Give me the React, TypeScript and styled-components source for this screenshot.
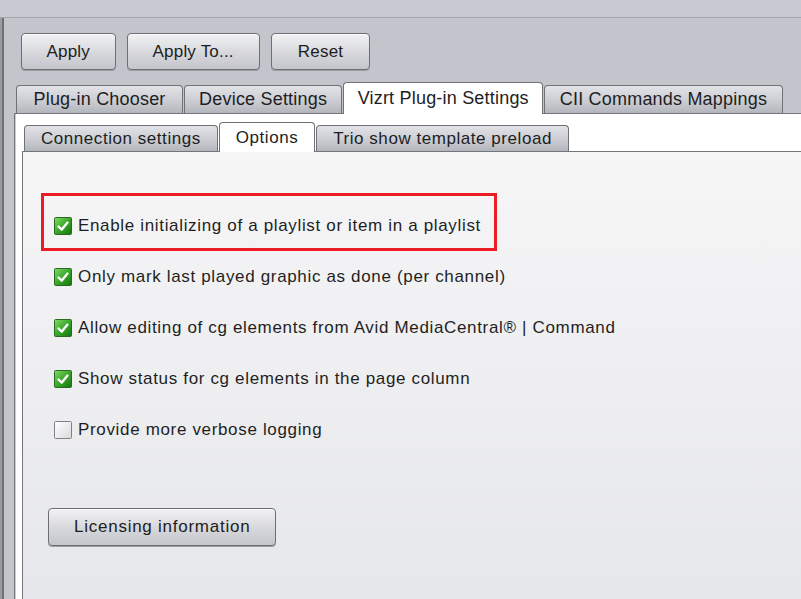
import React from 'react'
import styled, { createGlobalStyle } from 'styled-components'

const GlobalStyle = createGlobalStyle`
  html, body {
    margin: 0;
    padding: 0;
    background: #c2c5cc;
    font-family: "Liberation Sans", Arial, sans-serif;
  }
`

const Window = styled.div`
  width: 801px;
  height: 599px;
  overflow: hidden;
  display: flex;
  flex-direction: column;
  background: #c2c5cc;
`
const TitleStrip = styled.div`
  height: 17px;
  flex-shrink: 0;
  background: #c8cad1;
  border-bottom: 1px solid #a3a5ab;
`
const Body = styled.div`
  flex: 1;
  display: flex;
  min-height: 0;
`
const LeftRail = styled.div`
  width: 12px;
  flex-shrink: 0;
  border-left: 2px solid #9a9ca1;
  box-shadow: inset 2px 0 #6f7175;
`
const Main = styled.div`
  flex: 1;
  display: flex;
  flex-direction: column;
  min-width: 0;
`
const Toolbar = styled.div`
  display: flex;
  gap: 11px;
  padding: 15px 0 0 7px;
`
const Button = styled.button<{ $pad?: number }>`
  height: 37px;
  padding: 0 ${({ $pad }) => $pad ?? 25}px;
  font-family: "Liberation Sans", Arial, sans-serif;
  font-size: 17px;
  letter-spacing: 0.2px;
  color: #1d1d1d;
  background: linear-gradient(#f2f2f4, #d6d7db 55%, #c4c6cc);
  border: 1px solid #6c6e73;
  border-radius: 4px;
  box-shadow: inset 0 1px 0 #fbfbfc, 0 1px 0 #9c9ea4;
`
const TabStrip = styled.div`
  display: flex;
  align-items: flex-end;
  height: 32px;
  margin-top: 11px;
  padding-left: 2px;
  position: relative;
  z-index: 1;
`
const Tab = styled.div<{ $active?: boolean; $small?: boolean; $pad?: number }>`
  height: ${({ $active, $small }) => ($small ? ($active ? 30 : 26) : $active ? 32 : 28)}px;
  box-sizing: border-box;
  padding: 0 ${({ $small, $pad }) => $pad ?? ($small ? 16 : 15)}px;
  display: flex;
  align-items: center;
  font-size: ${({ $small }) => ($small ? 17 : 18)}px;
  letter-spacing: ${({ $small }) => ($small ? 0.55 : 0.2)}px;
  color: #1e1e1e;
  border: 1px solid #6f7176;
  border-bottom: none;
  border-radius: 4px 4px 0 0;
  margin-right: 1px;
  margin-bottom: ${({ $active }) => ($active ? -1 : 0)}px;
  background: ${({ $active }) =>
    $active ? '#ffffff' : 'linear-gradient(#e2e3e7, #c9cbd1 60%, #b4b6bd)'};
  white-space: nowrap;
`
const TabPanel = styled.div`
  flex: 1;
  display: flex;
  flex-direction: column;
  background: #ffffff;
  border-top: 1px solid #74767b;
  border-left: 1px solid #74767b;
  box-shadow: inset 1px 0 #c9cbd0;
  padding: 7px 0 0 7px;
  margin-right: -40px;
`
const SubTabStrip = styled(TabStrip)`
  height: 30px;
  margin-top: 0;
`
const SubPanel = styled.div`
  flex: 1;
  display: flex;
  flex-direction: column;
  align-items: flex-start;
  border-top: 1px solid #74767b;
  border-left: 1px solid #74767b;
  background: linear-gradient(#f6f6f7, #e6e7ea);
  padding: 48px 0 0 31px;
`
const OptionRow = styled.div`
  height: 51px;
  display: inline-flex;
  align-items: center;
  gap: 6px;
  position: relative;
  font-size: 17px;
  letter-spacing: 0.66px;
  color: #1f1f1f;
  white-space: nowrap;
`
const Highlight = styled.span`
  position: absolute;
  left: -13px;
  right: -16px;
  top: -7px;
  bottom: 0;
  border: 3px solid #ec1c24;
`
const LicenseButton = styled(Button)`
  margin: 53px 0 0 -6px;
  font-size: 17px;
  letter-spacing: 0.75px;
  height: 38px;
`

const Check = ({ checked }: { checked: boolean }) => (
  <svg width="18" height="18" viewBox="0 0 18 18">
    <defs>
      <linearGradient id="gOn" x1="0" y1="0" x2="1" y2="1">
        <stop offset="0" stopColor="#86dc68" />
        <stop offset="0.5" stopColor="#3aa82a" />
        <stop offset="1" stopColor="#14730f" />
      </linearGradient>
      <linearGradient id="gOff" x1="0" y1="0" x2="1" y2="1">
        <stop offset="0" stopColor="#ffffff" />
        <stop offset="1" stopColor="#d8d9dc" />
      </linearGradient>
    </defs>
    <rect
      x="0.5"
      y="0.5"
      width="17"
      height="17"
      rx="1"
      fill={checked ? 'url(#gOn)' : 'url(#gOff)'}
      stroke={checked ? '#2a6a20' : '#808185'}
    />
    {checked && (
      <path d="M4.5 9.5 L7.8 12.6 L13.5 5.6" fill="none" stroke="#ffffff" strokeWidth="2.4" strokeLinecap="round" strokeLinejoin="round" />
    )}
  </svg>
)

const options = [
  { label: 'Enable initializing of a playlist or item in a playlist', checked: true, marked: true },
  { label: 'Only mark last played graphic as done (per channel)', checked: true },
  { label: 'Allow editing of cg elements from Avid MediaCentral® | Command', checked: true },
  { label: 'Show status for cg elements in the page column', checked: true },
  { label: 'Provide more verbose logging', checked: false },
]

const App = () => {
  return (
    <>
      <GlobalStyle />
      <Window>
        <TitleStrip />
        <Body>
          <LeftRail />
          <Main>
            <Toolbar>
              <Button $pad={24.5}>Apply</Button>
              <Button>Apply To...</Button>
              <Button $pad={26}>Reset</Button>
            </Toolbar>
            <TabStrip>
              <Tab $pad={16.5}>Plug-in Chooser</Tab>
              <Tab $pad={14}>Device Settings</Tab>
              <Tab $active $pad={13.5}>Vizrt Plug-in Settings</Tab>
              <Tab $pad={14.5}>CII Commands Mappings</Tab>
            </TabStrip>
            <TabPanel>
              <SubTabStrip>
                <Tab $small>Connection settings</Tab>
                <Tab $small $active>Options</Tab>
                <Tab $small>Trio show template preload</Tab>
              </SubTabStrip>
              <SubPanel>
                {options.map((o) => (
                  <OptionRow key={o.label}>
                    {o.marked && <Highlight />}
                    <Check checked={o.checked} />
                    {o.label}
                  </OptionRow>
                ))}
                <LicenseButton>Licensing information</LicenseButton>
              </SubPanel>
            </TabPanel>
          </Main>
        </Body>
      </Window>
    </>
  )
}

export default App
